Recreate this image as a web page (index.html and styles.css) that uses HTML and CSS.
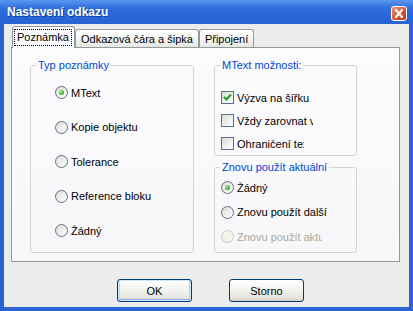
FILE: index.html
```
<!DOCTYPE html>
<html lang="cs">
<head>
    <meta charset="UTF-8">
    <title>Nastavení odkazu</title>
    <link rel="stylesheet" href="styles.css">
</head>
<body>
    <div class="window">
        <div class="titlebar">
            <span class="title">Nastavení odkazu</span>
            <span class="close">
                <svg width="16" height="15" viewBox="0 0 16 15">
                    <defs>
                        <linearGradient id="cg" x1="0" y1="0" x2="1" y2="1">
                            <stop offset="0" stop-color="#ec9a80"/>
                            <stop offset="0.5" stop-color="#d75a3a"/>
                            <stop offset="1" stop-color="#b9351a"/>
                        </linearGradient>
                    </defs>
                    <rect x="0.5" y="0.5" width="15" height="14" rx="2.5" fill="url(#cg)" stroke="#ffffff"/>
                    <path d="M5 4 L11 11 M11 4 L5 11" stroke="#ffffff" stroke-width="2" stroke-linecap="square"/>
                </svg>
            </span>
        </div>
        <div class="client">
            <div class="tabs">
                <div class="tab active"><span class="focus">Poznámka</span></div>
                <div class="tab">Odkazová čára a šipka</div>
                <div class="tab">Připojení</div>
            </div>
            <div class="panel">
                <fieldset class="group type-group">
                    <legend>Typ poznámky</legend>
                    <div class="opts">
                        <label class="opt"><span class="radio checked"></span>MText</label>
                        <label class="opt"><span class="radio"></span>Kopie objektu</label>
                        <label class="opt"><span class="radio"></span>Tolerance</label>
                        <label class="opt"><span class="radio"></span>Reference bloku</label>
                        <label class="opt"><span class="radio"></span>Žádný</label>
                    </div>
                </fieldset>
                <div class="right-col">
                    <fieldset class="group mtext-group">
                        <legend>MText možnosti:</legend>
                        <div class="opts">
                            <label class="opt">
                                <span class="check">
                                    <svg width="11" height="11" viewBox="0 0 11 11"><path d="M2 5 L4.5 7.5 L9 2.5" fill="none" stroke="#21a121" stroke-width="2.2"/></svg>
                                </span><span class="txt">Výzva na šířku</span>
                            </label>
                            <label class="opt"><span class="check"></span><span class="txt">Vždy zarovnat vlevo</span></label>
                            <label class="opt"><span class="check"></span><span class="txt short">Ohraničení textu</span></label>
                        </div>
                    </fieldset>
                    <fieldset class="group reuse-group">
                        <legend>Znovu použít aktuální</legend>
                        <div class="opts">
                            <label class="opt"><span class="radio checked"></span><span class="txt">Žádný</span></label>
                            <label class="opt"><span class="radio"></span><span class="txt">Znovu použít další</span></label>
                            <label class="opt disabled"><span class="radio"></span><span class="txt short">Znovu použít aktuální</span></label>
                        </div>
                    </fieldset>
                </div>
            </div>
            <div class="buttons">
                <button type="button" class="btn default">OK</button>
                <button type="button" class="btn">Storno</button>
            </div>
        </div>
    </div>
</body>
</html>
```
FILE: styles.css
```
body {
    margin: 0;
    font-family: "Liberation Sans", Arial, sans-serif;
    font-size: 11px;
    color: #000;
}
.window {
    width: 413px;
    height: 311px;
    display: flex;
    flex-direction: column;
    background-color: #2b63d5;
}
.titlebar {
    height: 24px;
    display: flex;
    align-items: center;
    padding: 0 6px 0 7px;
    background: linear-gradient(#5b96f0, #2f6edc 35%, #2865d8 75%, #2a63d2);
}
.title {
    flex: 1;
    color: #ffffff;
    font-weight: bold;
    font-size: 12px;
    text-shadow: 1px 1px 0 #123f98;
}
.close {
    display: flex;
    margin-top: 3px;
}
.client {
    flex: 1;
    margin: 0 4px 4px 4px;
    background-color: #ececec;
    display: flex;
    flex-direction: column;
}
.tabs {
    display: flex;
    align-items: flex-end;
    height: 20px;
    padding: 3px 0 0 8px;
}
.tab {
    height: 17px;
    padding: 0 5px;
    display: flex;
    align-items: center;
    border: 1px solid #919b9c;
    border-bottom: none;
    border-radius: 3px 3px 0 0;
    background: linear-gradient(#ffffff, #f3f3f0 60%, #e6e6e2);
    white-space: nowrap;
}
.tab.active {
    height: 21px;
    margin-bottom: -1px;
    padding: 0 3px 0 2px;
    background: #fcfcfe;
    position: relative;
    z-index: 1;
}
.focus {
    padding: 0 2px;
    outline: 1px dotted #000;
    line-height: 15px;
}
.panel {
    height: 202px;
    margin: 0 9px 0 7px;
    padding: 11px 0 0 18px;
    border: 1px solid #919b9c;
    background: linear-gradient(#fcfcfe, #f7f7f9);
    display: flex;
    gap: 20px;
}
.group {
    margin: 0;
    padding: 0;
    border: 1px solid #d3d3cf;
    border-radius: 3px;
    min-width: 0;
    box-sizing: border-box;
}
.group legend {
    margin-left: 5px;
    padding: 0 2px;
    line-height: 13px;
    color: #0046d5;
}
.type-group {
    width: 164px;
    height: 194px;
}
.type-group .opts {
    display: flex;
    flex-direction: column;
    gap: 21.5px;
    padding: 14px 0 0 24px;
}
.right-col {
    width: 143px;
    display: flex;
    flex-direction: column;
    gap: 5px;
}
.mtext-group {
    height: 97px;
}
.mtext-group .opts {
    display: flex;
    flex-direction: column;
    gap: 10px;
    padding: 19px 0 0 6px;
}
.mtext-group .txt {
    width: 76px;
}
.mtext-group .txt.short {
    width: 67px;
}
.reuse-group {
    height: 92px;
}
.reuse-group .opts {
    display: flex;
    flex-direction: column;
    gap: 11.5px;
    padding: 7px 0 0 6px;
}
.reuse-group .txt {
    width: 92px;
}
.reuse-group .txt.short {
    width: 85px;
}
.opt {
    display: flex;
    align-items: center;
    height: 13px;
    gap: 3px;
    white-space: nowrap;
}
.txt {
    overflow: hidden;
}
.radio {
    width: 11px;
    height: 11px;
    flex: none;
    border: 1px solid #5a7089;
    border-radius: 50%;
    background: linear-gradient(135deg, #dcdcd6, #ffffff);
    display: flex;
    align-items: center;
    justify-content: center;
}
.radio.checked::after {
    content: "";
    width: 5px;
    height: 5px;
    border-radius: 50%;
    background: radial-gradient(circle at 35% 35%, #a6ec9e, #3fb33a 60%, #21a121);
}
.check {
    width: 11px;
    height: 11px;
    flex: none;
    border: 1px solid #5a7089;
    background: linear-gradient(135deg, #dcdcd6, #ffffff);
    display: flex;
    align-items: center;
    justify-content: center;
}
.opt.disabled {
    color: #aca899;
}
.opt.disabled .radio {
    border-color: #cac8bb;
    background: #f5f4ea;
}
.buttons {
    display: flex;
    gap: 37px;
    padding: 17px 0 0 113px;
}
.btn {
    width: 75px;
    height: 23px;
    padding: 0;
    border: 1px solid #003c74;
    border-radius: 3px;
    background: linear-gradient(#ffffff, #f2f2ee 50%, #e4e3de 85%, #d6d0c5);
    font-family: "Liberation Sans", Arial, sans-serif;
    font-size: 11px;
    color: #000;
}
.btn.default {
    box-shadow: inset 0 0 0 1px #cee7ff, inset 0 -2px 0 0 #89adf0, inset 2px 0 0 0 #bcd4f6, inset -2px 0 0 0 #bcd4f6;
}
```
